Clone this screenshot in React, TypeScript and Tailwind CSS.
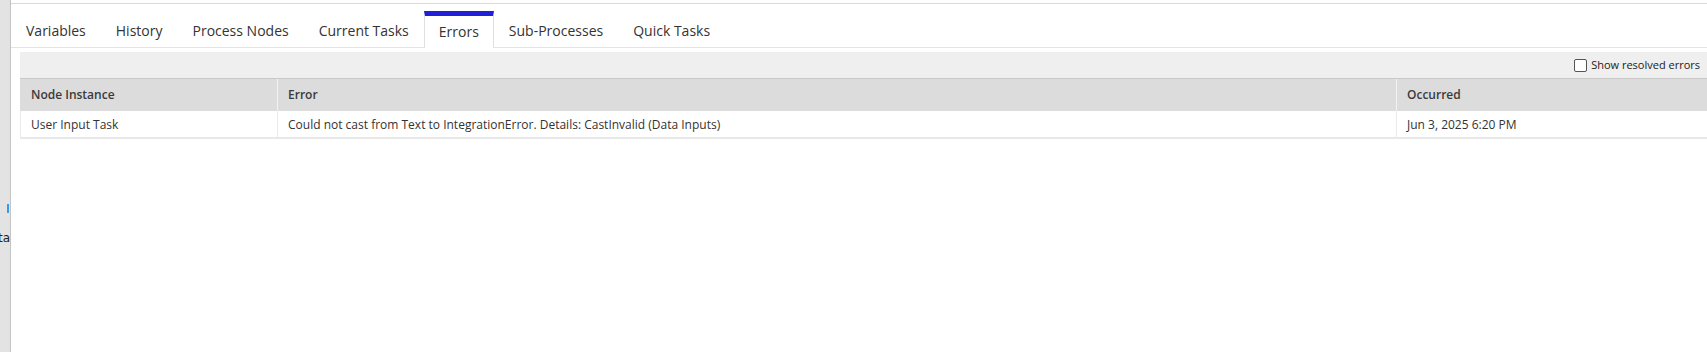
const tabs = ["Variables", "History", "Process Nodes", "Current Tasks", "Errors", "Sub-Processes", "Quick Tasks"];

const rows = [
  {
    node: "User Input Task",
    error: "Could not cast from Text to IntegrationError. Details: CastInvalid (Data Inputs)",
    occurred: "Jun 3, 2025 6:20 PM",
  },
];

export default function App() {
  const active = "Errors";

  return (
    <div className="flex h-[352px] w-full bg-white text-[#333] font-['Open_Sans',sans-serif] overflow-hidden">
      {/* left rail */}
      <div className="relative w-[11px] shrink-0 bg-[#e3e3e3] border-r border-[#c4c4c4]">
        <div className="absolute right-[1px] top-[204px] h-[9px] w-[2px] bg-[#3b9be0]" />
        <div className="absolute right-0 top-[229px] flex w-[11px] justify-end overflow-hidden whitespace-nowrap text-[12px] font-['DejaVu_Sans',sans-serif] text-[#222]">
          Data
        </div>
      </div>

      <div className="flex min-w-0 flex-1 flex-col pt-[3px]">
        <div className="border-t border-[#d9d9d9]" />

        {/* tabs */}
        <div className="flex h-[44px] items-end border-b border-[#e4e4e4]">
          {tabs.map((t) =>
            t === active ? (
              <div
                key={t}
                className="-mb-px flex h-[37px] items-center border-x border-[#e0e0e0] border-t-[5px] border-t-[#2020d8] bg-white px-[14px] pb-[2px] text-[14px]"
              >
                {t}
              </div>
            ) : (
              <div key={t} className="flex h-[36px] items-center px-[15px] pt-[3px] text-[14px]">
                {t}
              </div>
            )
          )}
        </div>

        {/* errors panel */}
        <div className="ml-[9px] mt-[4px]">
          <div className="flex h-[27px] items-center justify-end border-b border-[#c9c9c9] bg-[#efefef] pr-[7px]">
            <label className="flex items-center gap-[4px] text-[11px] text-[#222]">
              <span className="h-[13px] w-[13px] rounded-[2px] border border-[#555] bg-white" />
              Show resolved errors
            </label>
          </div>

          <div className="grid grid-cols-[257px_1119px_1fr] border-b-2 border-[#e8e8e8] text-[12px]">
            <div className="flex h-[32px] items-center bg-[#dcdcdc] px-[11px] font-semibold text-[#3a3a3a]">Node Instance</div>
            <div className="flex h-[32px] items-center border-l border-[#f2f2f2] bg-[#dcdcdc] px-[10px] font-semibold text-[#3a3a3a]">Error</div>
            <div className="flex h-[32px] items-center border-l border-[#f2f2f2] bg-[#dcdcdc] px-[10px] font-semibold text-[#3a3a3a]">Occurred</div>
            {rows.map((r) => (
              <div key={r.node} className="contents">
                <div className="flex h-[26px] items-center border-l border-[#eaeaea] px-[10px] pt-px">{r.node}</div>
                <div className="flex h-[26px] items-center border-l border-[#eaeaea] px-[10px] pt-px">{r.error}</div>
                <div className="flex h-[26px] items-center border-l border-[#eaeaea] px-[10px] pt-px">{r.occurred}</div>
              </div>
            ))}
          </div>
        </div>
      </div>
    </div>
  );
}
